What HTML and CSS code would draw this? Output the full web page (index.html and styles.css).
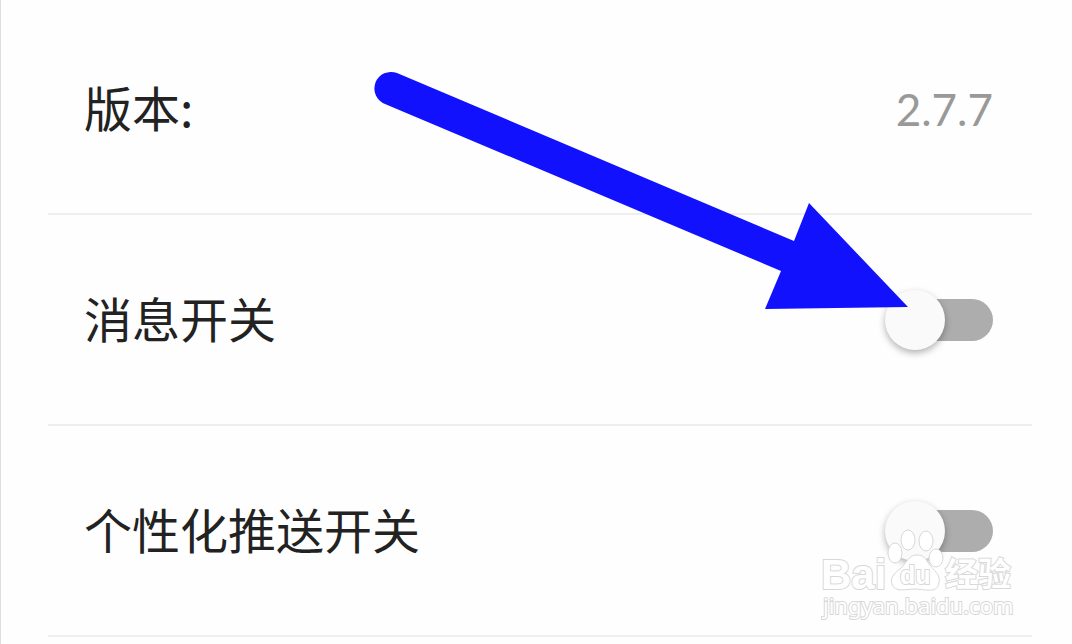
FILE: index.html
```
<!DOCTYPE html>
<html lang="zh-CN">
<head>
<meta charset="utf-8">
<title>设置</title>
<link rel="stylesheet" href="styles.css">
</head>
<body>
<main class="settings">
  <div class="row">
    <span class="label">版本:</span>
    <span class="value">2.7.7</span>
  </div>
  <div class="row">
    <label class="label" for="message">消息开关</label>
    <input class="switch" type="checkbox" role="switch" id="message">
  </div>
  <div class="row">
    <label class="label" for="push">个性化推送开关</label>
    <input class="switch" type="checkbox" role="switch" id="push">
  </div>
  <svg class="arrow" viewBox="0 0 534 238" aria-hidden="true">
    <path d="M23 2L420 170L435 132L534 236L391 238L407 200L11 33A16.500 16.500 0 0 1 23 2Z"/>
  </svg>
  <svg class="watermark" viewBox="0 0 200 100" aria-hidden="true">
    <g class="mark">
      <ellipse cx="87" cy="20" rx="7" ry="10"/>
      <ellipse cx="105" cy="21" rx="7" ry="10"/>
      <ellipse cx="74" cy="33" rx="7" ry="10"/>
      <ellipse cx="115" cy="38" rx="7" ry="9"/>
      <path d="M96 35C87 35 86 43 79 49C72 54 69 59 71 64C74 73 84 69 95 69C107 70 116 73 118 63C120 54 112 50 108 44C104 38 103 35 96 35Z"/>
    </g>
    <text class="brand" x="0" y="69">Bai</text>
    <text class="du" x="79" y="64">du</text>
    <text class="brand-cn" x="124" y="66">经验</text>
    <text class="site" x="2" y="94">jingyan.baidu.com</text>
  </svg>
</main>
</body>
</html>
```
FILE: styles.css
```
* {
  box-sizing: border-box;
}

body {
  margin: 0;
  background: #fefefe;
  color: #222;
  font-family: "Noto Sans CJK SC", sans-serif;
}

.settings {
  position: relative;
  min-height: 100vh;
  padding: 4px 40px 0 47px;
  border-left: 1px solid #ddd;
}

.row {
  display: flex;
  align-items: center;
  justify-content: space-between;
  min-height: 211px;
  padding: 0 39px 0 36px;
  border-bottom: 2px solid #eee;
}

.label {
  padding-bottom: 6px;
  font-size: 48px;
  line-height: 72px;
}

.value {
  color: #999;
  font-family: Lato, sans-serif;
  font-size: 44px;
  line-height: 56px;
}

.switch {
  appearance: none;
  display: grid;
  width: 108px;
  height: 60px;
  margin: 0;
  align-items: center;
  cursor: pointer;
}

.switch::before,
.switch::after {
  content: "";
  grid-area: 1 / 1;
}

.switch::before {
  width: 100px;
  height: 42px;
  justify-self: end;
  border-radius: 21px;
  background: #adadad;
}

.switch::after {
  width: 60px;
  height: 60px;
  border-radius: 50%;
  background: #fafafa;
  box-shadow: 0 3px 7px rgba(0, 0, 0, 0.3);
}

.switch:checked::after {
  justify-self: end;
}

.arrow {
  position: absolute;
  top: 71px;
  left: 373px;
  width: 534px;
  height: 238px;
  overflow: visible;
  fill: #1111fd;
}

.watermark {
  position: absolute;
  top: 520px;
  right: 51px;
  width: 200px;
  height: 100px;
  fill: #fff;
  stroke: #d8d8d8;
  stroke-width: 2px;
  paint-order: stroke;
  pointer-events: none;
}

.mark {
  stroke-width: 1px;
  paint-order: normal;
}

.brand {
  font: bold 42px "Liberation Sans", sans-serif;
}

.du {
  font: bold 25px "Liberation Sans", sans-serif;
}

.brand-cn {
  font: bold 33px "Noto Sans CJK SC", sans-serif;
}

.site {
  font: 22px "Noto Sans", sans-serif;
}
```
